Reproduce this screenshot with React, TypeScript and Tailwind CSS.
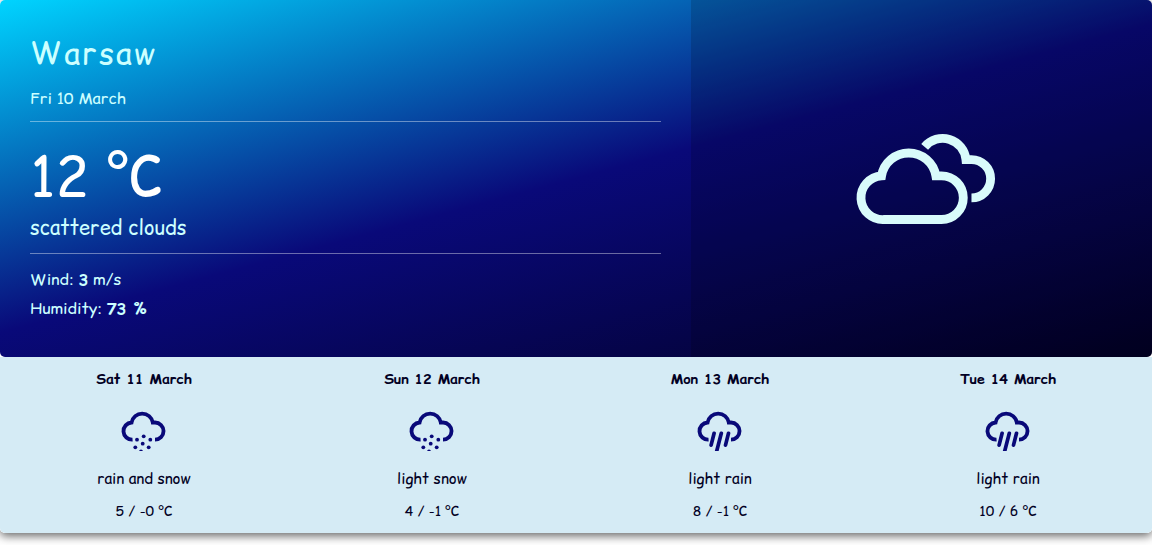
type Sky = "snow" | "rain";

type ForecastDay = {
  date: string;
  sky: Sky;
  description: string;
  temperature: string;
};

const forecast: ForecastDay[] = [
  { date: "Sat 11 March", sky: "snow", description: "rain and snow", temperature: "5 / -0 °C" },
  { date: "Sun 12 March", sky: "snow", description: "light snow", temperature: "4 / -1 °C" },
  { date: "Mon 13 March", sky: "rain", description: "light rain", temperature: "8 / -1 °C" },
  { date: "Tue 14 March", sky: "rain", description: "light rain", temperature: "10 / 6 °C" },
];

const snowDots = [
  [24.7, 35.3],
  [18, 38.7],
  [31.3, 38.7],
  [23.7, 42.7],
  [16.3, 46.3],
  [29.7, 46.3],
  [22, 50.4],
];

function ScatteredCloudsIcon() {
  return (
    <svg viewBox="-10 -2 183 142" className="h-[140px] w-[180px]" fill="none" stroke="#d9fbfb" strokeWidth="9" aria-hidden="true">
      <path d="M43 110.2 A22.2 22.2 0 0 1 40.4 65.8 A28 28 0 0 1 95.6 65.8 H101.3 A22.2 22.2 0 0 1 101.3 110.2 Z" />
      <path d="M84.2 36.3 A23.8 23.8 0 0 1 126.2 49.3 H131.8 A19.4 19.4 0 0 1 131.8 88.2" />
    </svg>
  );
}

function ForecastIcon({ sky }: { sky: Sky }) {
  return (
    <svg viewBox="0 0 50 50" className="h-[50px] w-[50px]" fill="none" stroke="#090979" aria-hidden="true">
      <path
        transform="translate(-3 -3.8) scale(.385)"
        strokeWidth="10"
        d="M43 110.2 A22.2 22.2 0 0 1 40.4 65.8 A28 28 0 0 1 95.6 65.8 H101.3 A22.2 22.2 0 0 1 101.3 110.2"
      />
      {sky === "snow" ? (
        <g fill="#090979" stroke="none">
          {snowDots.map(([x, y]) => (
            <circle key={`${x}-${y}`} cx={x} cy={y} r="1.9" />
          ))}
        </g>
      ) : (
        <path strokeWidth="3.7" strokeLinecap="round" d="M19.1 32.3 L16.1 44.1 M26.3 32.3 L21.6 50.5 M33.5 32.3 L30.5 44.1" />
      )}
    </svg>
  );
}

export default function App() {
  return (
    <main className="overflow-hidden pb-4 font-['Comic_Relief','Comic_Sans_MS','Comic_Neue','Open_Sans',cursive]">
      <article className="rounded-[5px] shadow-[0_3px_10px_rgba(0,0,0,0.6)]">
        <div className="rounded-[5px] bg-white">
          <section className="flex overflow-hidden rounded-[5px] bg-[linear-gradient(345deg,#020024_0%,#090979_50%,#00d4ff_100%)] text-[#ccffff]">
            <div className="w-3/5 px-[30px] pt-[30px] pb-[34px] font-medium">
              <header className="border-b border-white/40 pb-[11px]">
                <h1 className="mb-[10px] text-[31px] leading-[46px] tracking-[2px]">Warsaw</h1>
                <p className="text-base leading-6">Fri 10 March</p>
              </header>
              <div className="border-b border-white/40 pt-[18px] pb-[9px]">
                <p className="text-[56px] leading-[72px] text-white">12 °C</p>
                <p className="text-[20px] leading-8">scattered clouds</p>
              </div>
              <div className="pt-[11px] text-base leading-[29px]">
                <p>
                  Wind: <b>3</b> m/s
                </p>
                <p>
                  Humidity: <b>73 %</b>
                </p>
              </div>
            </div>
            <div className="flex w-2/5 items-center justify-center bg-black/15">
              <ScatteredCloudsIcon />
            </div>
          </section>
          <section className="grid grid-cols-4 rounded-b-[5px] bg-[#d5ebf5] pt-[10px] pb-[10px] text-center text-[#020024]">
            {forecast.map((day) => (
              <div key={day.date} className="flex flex-col items-center">
                <h2 className="mb-[10px] text-sm leading-6 font-bold">{day.date}</h2>
                <ForecastIcon sky={day.sky} />
                <p className="mt-4 text-[15px] leading-6">{day.description}</p>
                <p className="mt-2 text-sm leading-6">{day.temperature}</p>
              </div>
            ))}
          </section>
        </div>
      </article>
    </main>
  );
}
